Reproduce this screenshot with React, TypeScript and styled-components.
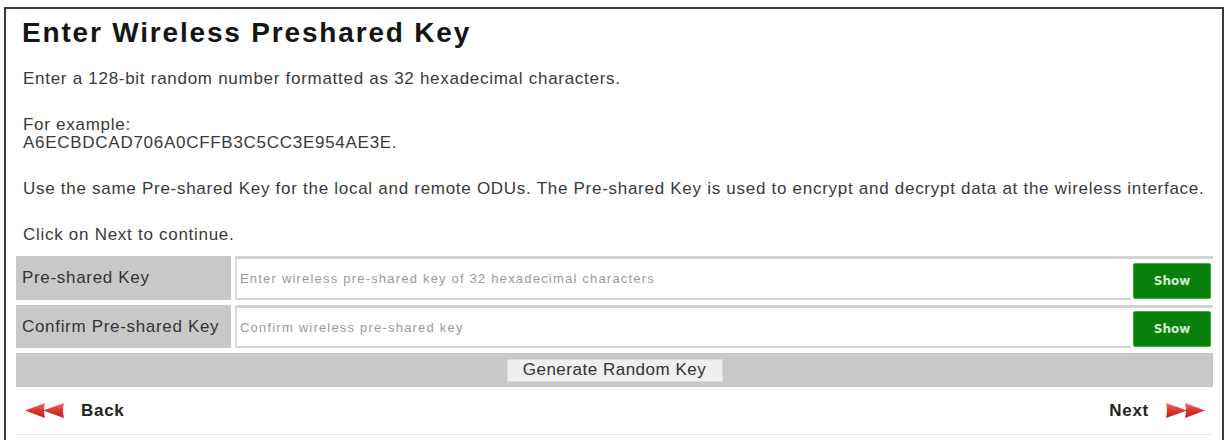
import { useState } from "react";
import styled, { createGlobalStyle } from "styled-components";

const GlobalStyle = createGlobalStyle`
  html, body {
    margin: 0;
    padding: 0;
    background: #ffffff;
  }

  body {
    font-family: "Liberation Sans", Arial, sans-serif;
    color: #333333;
  }

  * {
    box-sizing: border-box;
  }
`;

function Arrows({ dir }: { dir: "left" | "right" }) {
  const id = `arrow-fill-${dir}`;
  return (
    <ArrowSvg
      width="40"
      height="17"
      viewBox="0 0 40 17"
      style={{ transform: dir === "right" ? "scaleX(-1)" : undefined }}
    >
      <defs>
        <linearGradient id={id} x1="0" y1="0" x2="0" y2="1">
          <stop offset="0" stopColor="#ec7070" />
          <stop offset="0.5" stopColor="#dc3430" />
          <stop offset="1" stopColor="#bc2020" />
        </linearGradient>
      </defs>
      <path d="M0 8.5 L20 1 Q18 8.5 20 16 Z" fill={`url(#${id})`} />
      <path d="M18 8.5 L39 1 Q37 8.5 39 16 Z" fill={`url(#${id})`} />
    </ArrowSvg>
  );
}

function KeyRow({
  label,
  placeholder,
}: {
  label: string;
  placeholder: string;
}) {
  const [visible, setVisible] = useState(false);
  return (
    <Row>
      <LabelCell>{label}</LabelCell>
      <FieldCell>
        <KeyInput
          type={visible ? "text" : "password"}
          placeholder={placeholder}
        />
        <ShowButton type="button" onClick={() => setVisible((v) => !v)}>
          {visible ? "Hide" : "Show"}
        </ShowButton>
      </FieldCell>
    </Row>
  );
}

export default function App() {
  return (
    <>
      <GlobalStyle />
      <Frame>
        <Title>Enter Wireless Preshared Key</Title>
        <Text>
          Enter a 128-bit random number formatted as 32 hexadecimal characters.
        </Text>
        <Text>
          For example:
          <br />
          A6ECBDCAD706A0CFFB3C5CC3E954AE3E.
        </Text>
        <Text>
          Use the same Pre-shared Key for the local and remote ODUs. The
          Pre-shared Key is used to encrypt and decrypt data at the wireless
          interface.
        </Text>
        <Text>Click on Next to continue.</Text>

        <Form>
          <KeyRow
            label="Pre-shared Key"
            placeholder="Enter wireless pre-shared key of 32 hexadecimal characters"
          />
          <KeyRow
            label="Confirm Pre-shared Key"
            placeholder="Confirm wireless pre-shared key"
          />
          <ActionRow>
            <GenerateButton type="button">Generate Random Key</GenerateButton>
          </ActionRow>
        </Form>

        <Footer>
          <NavLink href="#back">
            <Arrows dir="left" />
            Back
          </NavLink>
          <NavLink href="#next">
            Next
            <Arrows dir="right" />
          </NavLink>
        </Footer>
      </Frame>
    </>
  );
}

const Frame = styled.div`
  margin: 7px 2px 0 4px;
  height: 440px;
  border: 2px solid #3a3a3a;
  border-bottom: none;
  padding: 8px 9px 0 10px;
  letter-spacing: 0.045em;
`;

const Title = styled.h1`
  margin: 0 0 21px;
  padding-left: 6px;
  font-size: 28px;
  line-height: 32px;
  font-weight: 700;
  letter-spacing: 0.065em;
  color: #151515;
`;

const Text = styled.p`
  margin: 0 0 28px;
  padding-left: 7px;
  font-size: 17px;
  line-height: 18px;
  color: #3a3a3a;

  &:last-of-type {
    margin-bottom: 12px;
  }
`;

const Form = styled.div`
  display: grid;
  grid-template-rows: 44px 43px 34px;
  row-gap: 5px;
`;

const Row = styled.div`
  display: grid;
  grid-template-columns: 215px 1fr;
  column-gap: 4px;
`;

const LabelCell = styled.div`
  display: flex;
  align-items: center;
  padding-left: 6px;
  background: #c8c8c8;
  font-size: 17px;
  letter-spacing: 0.04em;
  color: #333333;
  white-space: nowrap;
`;

const FieldCell = styled.div`
  display: flex;
  align-items: center;
  gap: 2px;
  padding-right: 2px;
  background: #ffffff;
  border-top: 3px solid #d4d4d4;
`;

const KeyInput = styled.input`
  flex: 1;
  align-self: stretch;
  min-width: 0;
  border: none;
  border-left: 2px solid #dcdcdc;
  border-bottom: 2px solid #d4d4d4;
  padding: 0 0 0 3px;
  background: #ffffff;
  font-family: "Liberation Sans", Arial, sans-serif;
  font-size: 13px;
  letter-spacing: 1.2px;
  color: #333333;
  outline: none;

  &::placeholder {
    color: #9a9a9a;
  }
`;

const ShowButton = styled.button`
  width: 78px;
  height: 36px;
  margin-top: 2px;
  border: 1px solid #3cb43c;
  border-radius: 2px;
  background: #08800a;
  font-family: "DejaVu Sans", Verdana, sans-serif;
  font-size: 12px;
  font-weight: 700;
  letter-spacing: 0;
  color: #d6efd6;
  cursor: pointer;
`;

const ActionRow = styled.div`
  display: flex;
  align-items: center;
  justify-content: center;
  background: #c8c8c8;
`;

const GenerateButton = styled.button`
  width: 216px;
  height: 23px;
  border: 1px solid #dadada;
  background: #efefef;
  font-family: "Liberation Sans", Arial, sans-serif;
  font-size: 17px;
  letter-spacing: 0.03em;
  color: #333333;
  padding: 0;
  cursor: pointer;
`;

const Footer = styled.div`
  display: flex;
  align-items: center;
  justify-content: space-between;
  height: 48px;
  padding: 0 8px 0 9px;
  border-bottom: 1px solid #e6e6e6;
`;

const NavLink = styled.a`
  display: flex;
  align-items: center;
  gap: 16px;
  font-size: 17px;
  font-weight: 700;
  color: #222222;
  text-decoration: none;
`;

const ArrowSvg = styled.svg`
  display: block;
  flex: none;
`;
